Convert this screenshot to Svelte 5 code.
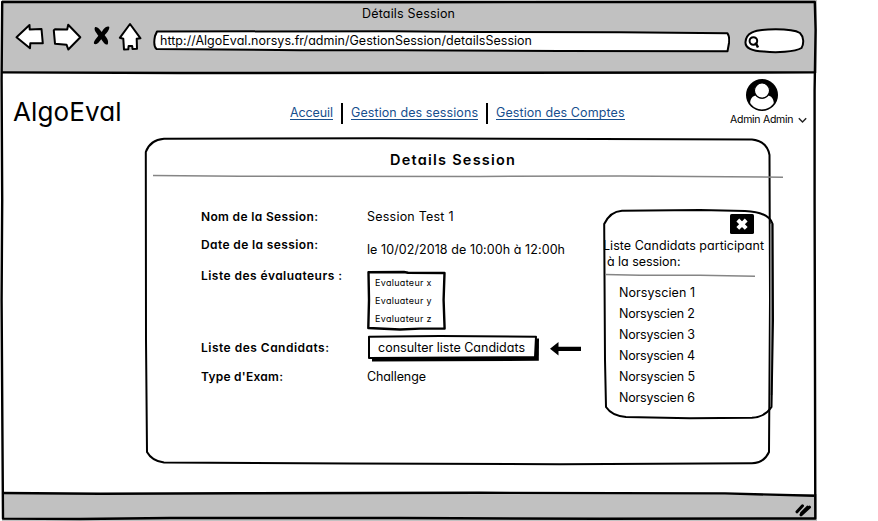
<script>
  const links = [
    { label: 'Acceuil', width: 43 },
    { label: 'Gestion des sessions', width: 127 },
    { label: 'Gestion des Comptes', width: 128.5 }
  ];
  const evaluators = ['Evaluateur x', 'Evaluateur y', 'Evaluateur z'];
  const candidates = [1, 2, 3, 4, 5, 6].map((n) => `Norsyscien ${n}`);

  // Spreads the letters of a node so that its text spans the given width.
  function fit(node, width) {
    const natural = node.getBoundingClientRect().width;
    const gaps = node.textContent.length - 1;
    const spacing = (width - natural) / gaps;
    node.style.letterSpacing = `${spacing}px`;
    node.style.marginRight = `${-spacing}px`;
  }
</script>

<div class="window">
  <header class="chrome">
    <div class="title"><span class="t" use:fit={93}>Détails Session</span></div>
    <div class="toolbar">
      <svg class="tools" width="130" height="34" viewBox="14 20 130 34">
        <g fill="#fff" stroke="#000" stroke-width="2" stroke-linejoin="round">
          <path d="M16.5 37.3 L29.5 25 L29.7 29.5 L41.5 29 L42.8 43.3 L30.3 43.3 L30 48.2 Z" />
          <path d="M53.8 30.3 L55 29.3 L67.2 29.5 L68.2 24.8 L80.3 37.3 L68.3 49.5 L66.6 44.8 L55 43.7 Z" />
          <path d="M119.8 37.8 L130 24 L140.5 38.3 L136.7 38.8 L137 48.8 L132.5 49 L132.2 46 L128.6 46 L128.3 49.3 L124 49.4 L123.3 38.7 Z" />
        </g>
        <path d="M95 27.3 C97 26.2 99.5 29.3 101.8 32 C103.5 29 106.6 25.3 109.3 27 C109.6 30 106.5 33 104.7 35.2 C106.7 38 109 40.3 107.8 44.2 C105.3 45.6 103 41.5 101.2 39.2 C99.5 41.4 97 45.5 94 43.7 C93.4 41.3 96.5 38 98.3 35.7 C96.5 33 93.5 30 95 27.3 Z" fill="#000" />
      </svg>
      <div class="address">
        <svg class="sketch" width="578" height="24" viewBox="152 29 578 24" fill="#fff" stroke="#000" stroke-width="2" stroke-linejoin="round">
          <path d="M157 31.5 L390 31.2 L480 32 L620 32.2 L727.5 33.3 Q729.8 37 729 43 L727.5 51.3 L560 50.9 L400 50.2 L300 50.2 L156.5 49 Q153 46 155 36 Z" />
        </svg>
        <span class="t" use:fit={372}>http://AlgoEval.norsys.fr/admin/GestionSession/detailsSession</span>
      </div>
      <svg class="search" width="62" height="28" viewBox="743 27 62 28" fill="#fff" stroke="#000" stroke-width="2" stroke-linejoin="round">
        <path d="M745.5 42 C746 33 754 30 768 29.5 C782 29 794 29.5 800 33 C804 37 804 44 801.5 48 C795 52 776 53 764 51.5 C752 51 745 48 745.5 42 Z" />
        <circle cx="753.4" cy="41" r="3.8" />
        <path d="M755.5 42.5 L758 47.5" stroke-width="2.5" />
      </svg>
    </div>
  </header>

  <main>
    <div class="topbar">
      <div class="brand"><span class="t" use:fit={108.5}>AlgoEval</span></div>
      <nav>
        {#each links as link}
          <a href="#top" style:width="{link.width}px"><span class="t" use:fit={link.width}>{link.label}</span></a>
        {/each}
      </nav>
      <div class="user">
        <svg width="34" height="34" viewBox="0 0 34 34">
          <circle cx="17" cy="17" r="16" fill="#000" />
          <path d="M5.2 25 C5.2 20.5 7.8 17.8 11 17.5 C14.5 21.8 19.5 21.8 23 17.5 C26 17.8 28.6 20.5 28.8 25 C26 29.4 21.5 31.4 17 31.4 C12.5 31.4 8 29.4 5.2 25 Z" fill="#fff" />
          <circle cx="17" cy="12.6" r="7.6" fill="#fff" stroke="#000" stroke-width="1.2" />
        </svg>
        <div class="account">
          <span class="t" use:fit={63.5}>Admin Admin</span>
          <svg width="9" height="7" viewBox="0 0 9 7"><path d="M0.8 1.2 L4.5 5 L8.2 1.2" fill="none" stroke="#222" stroke-width="1.4" /></svg>
        </div>
      </div>
    </div>

    <section class="panel">
      <svg class="sketch" width="642" height="330" viewBox="144 136 642 330" fill="none" stroke="#000" stroke-width="2">
        <path d="M164 138.8 L380 138.3 L600 139 L752 139.4 Q767 141 769.5 155 L770 300 L769 452 Q764 463 752 463.3 L560 464.2 L350 463.6 L164 462.6 Q152 461 147 452 L146 340 L145.8 152 Q150 140 164 138.8 Z" />
        <path d="M153 175.4 L240 176.2 L480 176.4 L620 176 L783 177.2" stroke="#858585" stroke-width="1.5" />
      </svg>
      <h1><span class="t" use:fit={125}>Details Session</span></h1>
      <dl>
        <div class="row name">
          <dt><span class="t" use:fit={117}>Nom de la Session:</span></dt>
          <dd><span class="t" use:fit={86.5}>Session Test 1</span></dd>
        </div>
        <div class="row date">
          <dt><span class="t" use:fit={117}>Date de la session:</span></dt>
          <dd><span class="t" use:fit={198}>le 10/02/2018 de 10:00h à 12:00h</span></dd>
        </div>
        <div class="row evals">
          <dt><span class="t" use:fit={141}>Liste des évaluateurs :</span></dt>
          <dd class="box">
            <svg class="sketch" width="80" height="62" viewBox="366 270 80 62" fill="none" stroke="#000" stroke-width="2.4" stroke-linejoin="round">
              <path d="M368.5 272.3 L404 272 L408 272.8 L444.5 273 L443.6 300 L444.6 328.6 L420 328.6 L400 329.5 L368.3 328 L369 300 Z" />
            </svg>
            {#each evaluators as name}
              <div><span class="t" use:fit={56.5}>{name}</span></div>
            {/each}
          </dd>
        </div>
        <div class="row cands">
          <dt><span class="t" use:fit={128}>Liste des Candidats:</span></dt>
          <dd class="action">
            <button type="button">
              <svg class="sketch" width="172" height="27" viewBox="367 335 172 27">
                <path d="M372 339 L539 338.5 L538.8 360.8 L372 361.6 Z" />
                <path d="M369 336.7 L440 336 L536 336.8 L535 357 L369 358 Z" fill="#fff" stroke="#000" stroke-width="2" stroke-linejoin="round" />
              </svg>
              <span class="t" use:fit={147}>consulter liste Candidats</span>
            </button>
            <svg width="32" height="14" viewBox="550 342 32 14"><path d="M550 348.8 L558.5 342 L558.5 346.8 L581 346.8 L581 351 L558.5 351 L558.5 355.5 Z" /></svg>
          </dd>
        </div>
        <div class="row kind">
          <dt><span class="t" use:fit={82}>Type d'Exam:</span></dt>
          <dd><span class="t" use:fit={59}>Challenge</span></dd>
        </div>
      </dl>

      <aside class="popup">
        <svg class="sketch" width="174" height="214" viewBox="601 207 174 214" fill="none" stroke="#000" stroke-width="2">
          <path d="M771.3 224 L771.3 395" stroke="#858585" stroke-width="2.5" />
          <path d="M622 210.7 L700 210 L745 210.9 Q769 212 772.6 224 L773 320 L771.5 407 Q765 417 752 417.7 L690 418.2 L626 417 Q612 416 606 407 L605 360 L604.2 224 Q610 211.5 622 210.7 Z" />
          <path d="M605 274.6 L640 275.3 L700 275.3 L755 276.2" stroke="#858585" stroke-width="1.5" />
        </svg>
        <div class="close">
          <svg width="24" height="20" viewBox="0 0 24 20">
            <rect width="24" height="20" rx="1.6" />
            <path d="M7.8 6 L16.2 14.4 M16.2 6 L7.8 14.4" stroke="#fff" stroke-width="4" />
          </svg>
        </div>
        <div class="caption">
          <div><span class="t" use:fit={161}>Liste Candidats participant</span></div>
          <div class="second"><span class="t" use:fit={73.5}>à la session:</span></div>
        </div>
        <ul>
          {#each candidates as name}
            <li><span class="t" use:fit={76}>{name}</span></li>
          {/each}
        </ul>
      </aside>
    </section>
  </main>

  <footer>
    <svg width="20" height="16" viewBox="794 500 20 16" fill="none" stroke="#000" stroke-width="3" stroke-linecap="round">
      <path d="M797 509.8 L802.5 503.8 M801 512.8 L809.5 505.2" />
      <path d="M801.5 511.2 L807.5 505.2" />
    </svg>
  </footer>

  <svg class="frame" width="820" height="521" viewBox="0 0 820 521" fill="none" stroke="#000" stroke-width="2.4" stroke-linejoin="round">
    <path d="M2.2 1.9 L400 2.2 L814.8 2 L815.6 30 L814.6 90 L814.6 200 L815 370 L815.3 518.5 L600 518.8 L400 518 L170 518 L80 519 L3 518.6 L2.4 430 L1.6 300 L2.2 200 L1.6 80 Z" />
    <path d="M2 72.4 L180 73 L450 72.8 L814 72.4" />
    <path d="M2 493 L100 493.8 L240 493.3 L480 492.8 L725 493.4 L814 495.8" />
  </svg>
</div>

<style>
  :global(body) { background: #fff; }
  .window {
    position: relative;
    display: flex;
    flex-direction: column;
    width: 817px;
    height: 521px;
    overflow: hidden;
    color: #000;
    font: 12.5px/18px Inter, "Noto Sans", sans-serif;
    font-feature-settings: "cv11" 1;
  }
  .t { display: inline-block; white-space: nowrap; }
  svg { display: block; flex: none; }
  .sketch, .frame { position: absolute; left: 0; top: 0; }
  .chrome { height: 73px; margin-left: 2px; background: #c1c1c1; }
  .title { padding: 5px 0 0 360px; }
  .toolbar { display: flex; align-items: flex-start; padding: 0 0 0 12px; margin-top: -3px; }
  .address {
    position: relative;
    width: 578px;
    height: 24px;
    margin: 9px 0 0 8px;
  }
  .address .t { position: relative; margin-left: 8px; margin-top: 3px; }
  .search { margin: 7px 0 0 13px; }
  main { flex: 1; min-height: 0; }
  .topbar { display: flex; height: 65px; align-items: flex-start; }
  .brand { width: 276px; padding: 22px 0 0 13px; box-sizing: border-box; margin-right: 14px; font-size: 26px; line-height: 34px; }
  nav { display: flex; width: 440px; padding-top: 30px; }
  a {
    position: relative;
    height: 16px;
    border-bottom: 1px solid #174f8e;
    color: #174f8e;
    line-height: 20px;
    text-decoration: none;
  }
  a + a { margin-left: 18px; }
  a + a::before {
    content: "";
    position: absolute;
    left: -10px;
    top: 0;
    width: 2px;
    height: 21px;
    background: #000;
  }
  .user { display: flex; flex-direction: column; padding-top: 5px; }
  .user > svg { margin-left: 15px; }
  .account { display: flex; align-items: center; gap: 5px; padding-top: 1px; font-size: 10.5px; line-height: 14px; }
  .panel { position: relative; width: 642px; height: 330px; margin: -2px 0 0 144px; }
  h1 { margin: 0; padding: 15px 0 0 246px; font-size: 14.5px; font-weight: 600; line-height: 18px; }
  dl { display: flex; flex-direction: column; margin: 38px 0 0 57px; }
  .row { display: flex; align-items: flex-start; }
  dt { width: 166px; padding-top: 1px; font-size: 12px; font-weight: 600; }
  dd { margin: 0; padding-top: 1px; }
  .name { height: 28px; }
  .date { height: 31px; }
  .date dd { padding-top: 6px; }
  .evals { height: 72px; }
  .cands { height: 29px; }
  .box { position: relative; width: 80px; height: 62px; margin: 4px 0 0 -1px; padding: 4px 0 0 9px; box-sizing: border-box; font-size: 9px; }
  .action { display: flex; align-items: flex-start; gap: 11px; padding-top: 0; }
  .action > svg { margin-top: 4px; }
  button {
    position: relative;
    width: 172px;
    height: 27px;
    margin: -3px 0 0;
    padding: 0 0 1px 11px;
    border: 0;
    background: none;
    color: #000;
    font: inherit;
    font-feature-settings: inherit;
    line-height: 24px;
    text-align: left;
  }
  button .t { position: relative; }
  .popup { position: absolute; left: 457px; top: 71px; width: 174px; height: 214px; }
  .close { padding: 7px 0 0 129px; }
  .caption { padding: 4px 0 0 2px; line-height: 16px; }
  .second { padding-left: 4px; }
  ul { margin: 12px 0 0; padding: 0 0 0 18px; list-style: none; line-height: 21px; }
  footer { display: flex; align-items: center; justify-content: flex-end; height: 27px; margin-left: 2px; padding: 4px 3px 0 0; box-sizing: border-box; background: #c1c1c1; }
</style>
